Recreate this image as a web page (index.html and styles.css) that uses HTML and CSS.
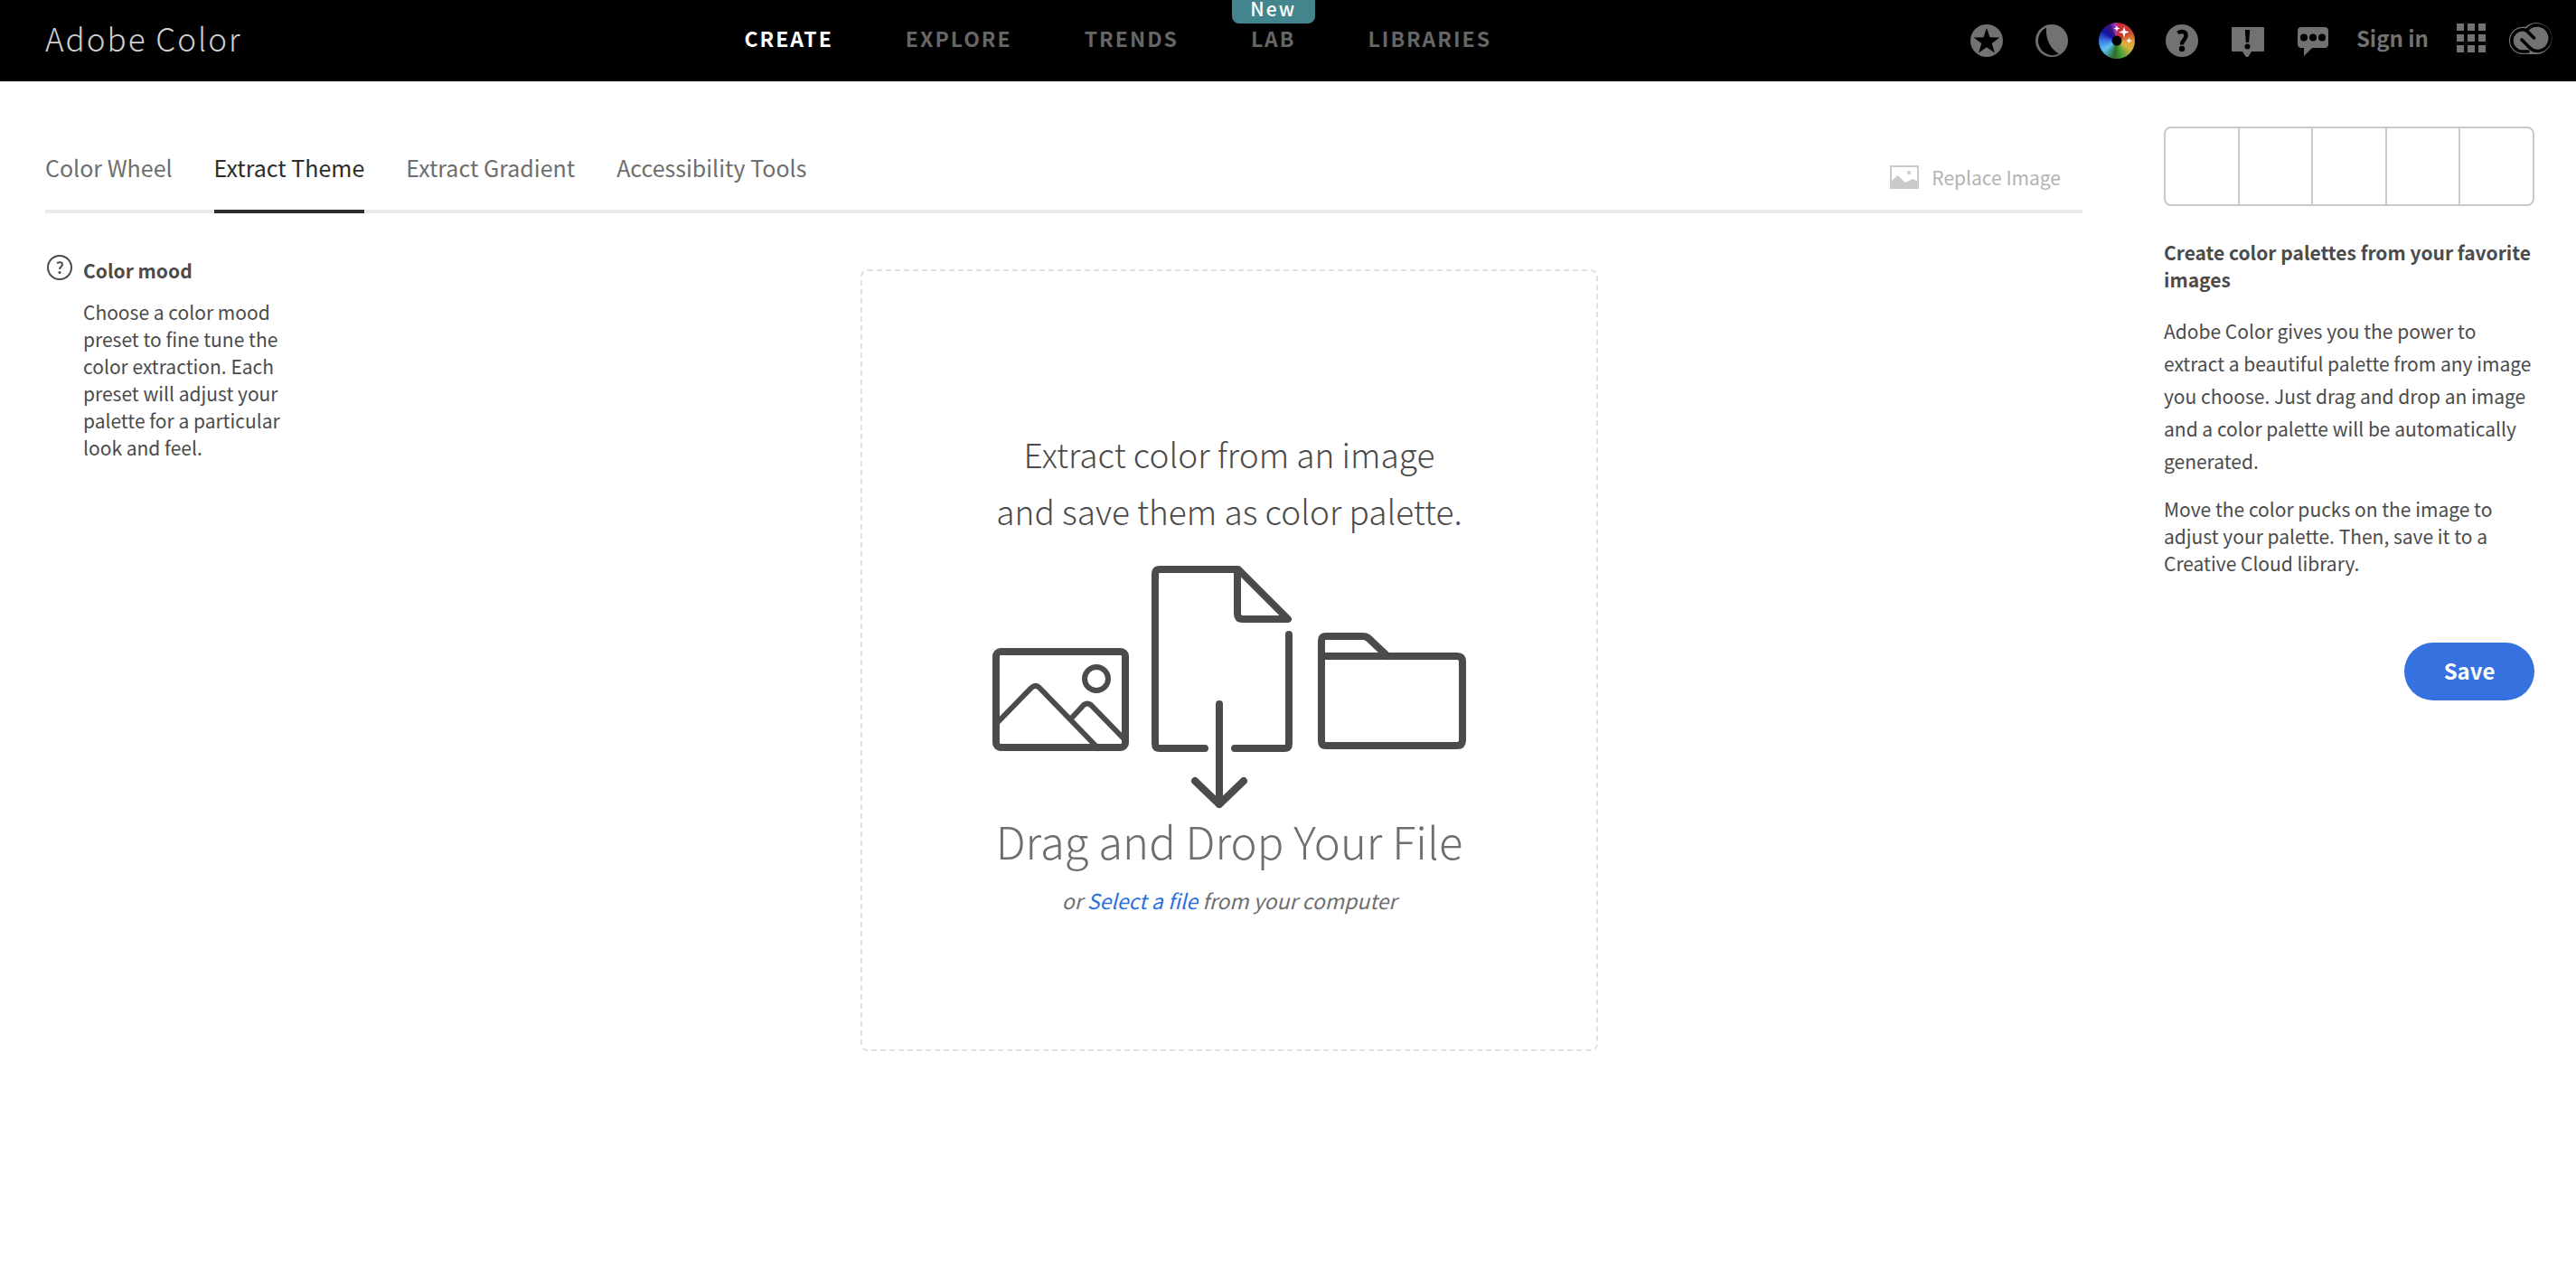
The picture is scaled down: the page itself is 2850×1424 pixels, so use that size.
FILE: index.html
```html
<!DOCTYPE html>
<html lang="en">
<head>
<meta charset="utf-8">
<title>Adobe Color</title>
<link rel="stylesheet" href="styles.css">
</head>
<body>
<header class="topbar">
  <a class="brand" href="#">Adobe Color</a>
  <nav class="mainnav" aria-label="Main">
    <a class="mainnav-link is-active" href="#">CREATE</a>
    <a class="mainnav-link" href="#">EXPLORE</a>
    <a class="mainnav-link" href="#">TRENDS</a>
    <a class="mainnav-link" href="#">LAB<span class="badge">New</span></a>
    <a class="mainnav-link" href="#">LIBRARIES</a>
  </nav>
  <div class="tools">
    <button class="tool" type="button" aria-label="Favorites"><svg width="36" height="36" viewBox="0 0 36 36"><circle cx="18" cy="18" r="18" fill="#727272"/><path d="M18 4l3.500 10.300 10.900.2-8.700 6.500 3.200 10.400L18 25.200l-8.900 6.200 3.200-10.400-8.700-6.500 10.900-.2z" fill="#000"/></svg></button>
    <button class="tool" type="button" aria-label="Appearance"><svg width="36" height="36" viewBox="0 0 36 36"><circle cx="18" cy="18" r="18" fill="#727272"/><path d="M12 3.500C11 14 15 26 26 32.500A16 16 0 0 1 12 3.500z" fill="#000"/></svg></button>
    <button class="tool wheel" type="button" aria-label="Color wheel"><svg width="40" height="40" viewBox="0 0 40 40"><circle cx="20" cy="20" r="5.500" fill="#000"/><path d="M28 4.500l1.400 4.600L34 10.500l-4.600 1.400L28 17l-1.400-5.100L22 10.500l4.600-1.400zM20 3l.9 2.600L23.500 6.500l-2.600.9L20 10l-.9-2.600L16.500 6.500l2.600-.9zM33.500 16.500l.9 2.600L37 20l-2.600.9-.9 2.600-.9-2.600L30 20l2.600-.9z" fill="#fff"/></svg></button>
    <button class="tool" type="button" aria-label="Help"><svg width="36" height="36" viewBox="0 0 36 36"><circle cx="18" cy="18" r="18" fill="#727272"/><path d="M13.500 9.500C18 6.500 22.500 8 22.500 12.500C22.500 17 18 17 18 22.500" fill="none" stroke="#000" stroke-width="4.500"/><circle cx="18" cy="27" r="3.200" fill="#000"/></svg></button>
    <button class="tool" type="button" aria-label="Feedback"><svg width="38" height="36" viewBox="0 0 38 36"><path d="M2 3h34q1 0 1 1v25q0 1-1 1H23l-5 8-5-8H2q-1 0-1-1V4q0-1 1-1z" fill="#727272"/><path d="M15.800 6h5.400l-1 14h-3.400z" fill="#000"/><circle cx="18.500" cy="24.500" r="3" fill="#000"/></svg></button>
    <button class="tool" type="button" aria-label="Discord"><svg width="34" height="36" viewBox="0 0 34 36"><path d="M4 3h26q4 0 4 4v15q0 4-4 4H16l-9 9V26H4q-4 0-4-4V7q0-4 4-4z" fill="#727272"/><circle cx="7" cy="14.500" r="4" fill="#000"/><circle cx="17" cy="14.500" r="4" fill="#000"/><circle cx="27" cy="14.500" r="4" fill="#000"/></svg></button>
    <a class="signin" href="#">Sign in</a>
    <button class="tool raised" type="button" aria-label="Apps"><svg width="32" height="32" viewBox="0 0 32 32" fill="#727272"><path d="M0 0h8v8H0zM12 0h8v8h-8zM24 0h8v8h-8zM0 12h8v8H0zM12 12h8v8h-8zM24 12h8v8h-8zM0 24h8v8H0zM12 24h8v8h-8zM24 24h8v8h-8z"/></svg></button>
    <a class="tool raised cloud" href="#" aria-label="Creative Cloud"><svg width="48" height="36" viewBox="0 0 48 36" fill="none" stroke="#000" stroke-width="3.600" stroke-linecap="round"><path d="M15 36h15.500a17.500 17.500 0 1 0-12.500-30.300h-3a15 15 0 0 0 0 30.300z" fill="#727272" stroke="none"/><path d="M27.500 18l-6-6Q18.500 8.800 15 8.800a12 12 0 0 0 0 24.200h6"/><path d="M14 20l9 9Q26.500 32.500 31 32.500a14.300 14.300 0 1 0-11-23.500"/></svg></a>
  </div>
</header>
<div class="layout">
  <main class="content">
    <div class="tabbar">
      <nav class="tabs" aria-label="Create tools">
        <a class="tab" href="#">Color Wheel</a>
        <a class="tab is-active" href="#">Extract Theme</a>
        <a class="tab" href="#">Extract Gradient</a>
        <a class="tab" href="#">Accessibility Tools</a>
      </nav>
      <button class="replace" type="button"><svg width="32" height="26" viewBox="0 0 32 26"><path d="M1 1h30v24H1z" fill="none" stroke="#cacaca" stroke-width="2"/><path d="M0 19l8.500-8 8.500 8 8-4 7 3v8H0z" fill="#cacaca"/><circle cx="21" cy="8" r="2" fill="#cacaca"/></svg>Replace Image</button>
    </div>
    <div class="workspace">
      <section class="mood">
        <svg class="mood-icon" width="28" height="28" viewBox="0 0 28 28"><circle cx="14" cy="14" r="13" fill="none" stroke="#4b4b4b" stroke-width="2"/><path d="M11 9c3-1.500 6-1 6 1.500 0 2.500-3 2.700-3 5.500" fill="none" stroke="#4b4b4b" stroke-width="2"/><circle cx="14" cy="19.500" r="1.500" fill="#4b4b4b"/></svg>
        <div class="mood-body">
          <h2 class="heading">Color mood</h2>
          <p class="mood-text">Choose a color mood preset to fine tune the color extraction. Each preset will adjust your palette for a particular look and feel.</p>
        </div>
      </section>
      <section class="dropzone">
        <p class="drop-intro">Extract color from an image<br>and save them as color palette.</p>
        <svg class="drop-art" width="524" height="268" viewBox="0 0 524 268" fill="none" stroke="#4b4b4b" stroke-width="8" stroke-linecap="round" stroke-linejoin="round">
          <rect x="4" y="95" width="143" height="106" rx="5"/>
          <g stroke-width="6"><circle cx="115" cy="125" r="13"/><path d="M6 173l37-38q5-4 9 0l65 67M88 168l13-14q4-3 8 0l36 37"/></g>
          <path d="M235 202h-50q-5 0-5-5V9q0-5 5-5h87l55 55h-50q-6 0-6-6V5M328 76v121q0 5-5 5h-55M251 153v111M224 238l27 26 27-26"/>
          <path d="M364 100V83q0-5 5-5h41q4 0 7 3l20 19M364 100h150q6 0 6 6v87q0 6-6 6H369q-5 0-5-5z"/>
        </svg>
        <p class="drop-title">Drag and Drop Your File</p>
        <p class="drop-sub">or <a class="drop-link" href="#">Select a file</a> from your computer</p>
      </section>
    </div>
  </main>
  <aside class="panel">
    <div class="palette"><span></span><span></span><span></span><span></span><span></span></div>
    <h2 class="heading">Create color palettes from your favorite images</h2>
    <p class="lead">Adobe Color gives you the power to extract a beautiful palette from any image you choose. Just drag and drop an image and a color palette will be automatically generated.</p>
    <p class="note">Move the color pucks on the image to adjust your palette. Then, save it to a Creative Cloud library.</p>
    <button class="save" type="button">Save</button>
  </aside>
</div>
</body>
</html>
```
FILE: styles.css
```css
* { box-sizing: border-box; }
body {
  margin: 0;
  background: #fff;
  color: #4b4b4b;
  font-family: "Noto Sans CJK SC", "Noto Sans", sans-serif;
  font-size: 21px;
  line-height: 30px;
}
h2, p { margin: 0; }
a { color: inherit; text-decoration: none; }
button { font: inherit; color: inherit; border: 0; padding: 0; background: none; cursor: pointer; }
svg { display: block; }

.topbar {
  display: flex;
  align-items: center;
  justify-content: space-between;
  height: 90px;
  padding: 0 26px 0 50px;
  background: #000;
  color: #727272;
}
.brand {
  margin-right: 26px;
  padding-bottom: 6px;
  color: #d0d0d0;
  font-size: 35px;
  font-weight: 300;
  letter-spacing: 2px;
  line-height: 48px;
}
.mainnav { display: flex; gap: 80px; align-self: flex-start; }
.mainnav-link {
  position: relative;
  color: #666;
  font-size: 23px;
  font-weight: 700;
  letter-spacing: 2px;
  line-height: 84px;
}
.mainnav-link.is-active { color: #fff; }
.badge {
  position: absolute;
  top: 0;
  left: 50%;
  width: 92px;
  height: 26px;
  margin-left: -46px;
  border-radius: 0 0 8px 8px;
  background: #43858c;
  color: #fff;
  font-size: 21px;
  font-weight: 500;
  line-height: 18px;
  text-align: center;
}
.tools { display: flex; align-items: center; gap: 36px; }
.wheel {
  margin: 0 -2px;
  border-radius: 50%;
  background: conic-gradient(#c8283c 0deg, #c8402c 55deg, #dca03c 95deg, #dcb43c 120deg, #50a03c 160deg, #2d6e28 190deg, #5fc3fa 235deg, #3c78e6 270deg, #1414a0 305deg, #3c1478 335deg, #aa3cdc 355deg, #c8283c 360deg);
}
.signin { margin: 0 -5px; padding-bottom: 6px; font-size: 24px; font-weight: 700; }
.raised { padding-bottom: 6px; }
.cloud { margin-left: -10px; }

.layout { display: flex; gap: 90px; padding: 0 46px 0 50px; }
.content { flex: 1; min-width: 0; }
.tabbar {
  display: flex;
  justify-content: space-between;
  margin-top: 79px;
  padding-right: 24px;
  box-shadow: inset 0 -4px #eaeaea;
}
.tabs { display: flex; gap: 46px; }
.tab {
  padding-bottom: 31px;
  border-bottom: 4px solid transparent;
  color: #6e6e6e;
  font-size: 25px;
  line-height: 32px;
}
.tab.is-active { border-color: #2c2c2c; color: #2c2c2c; }
.replace {
  display: flex;
  align-items: center;
  align-self: flex-start;
  gap: 14px;
  margin-top: 12px;
  color: #b3b3b3;
}
.workspace { display: flex; }
.mood { display: flex; gap: 12px; flex: 0 0 366px; padding: 46px 98px 0 2px; }
.mood-icon { flex: none; }
.mood-body { padding-top: 2px; }
.heading { font-size: 21px; font-weight: 700; line-height: 30px; }
.mood-text { margin-top: 16px; }
.dropzone {
  display: flex;
  flex-direction: column;
  align-items: center;
  width: 816px;
  margin: 62px auto 0;
  padding: 171px 24px 149px;
  border: 2px dashed #e1e1e1;
  border-radius: 8px;
  text-align: center;
}
.drop-intro { font-size: 37px; font-weight: 300; line-height: 63px; }
.drop-art { margin: 29px 0 4px; }
.drop-title { color: #6e6e6e; font-size: 49px; font-weight: 300; line-height: 64px; }
.drop-sub { margin-top: 18px; color: #6e6e6e; font-size: 23px; font-style: italic; line-height: 32px; }
.drop-link { color: #2d6ee0; }

.panel { display: flex; flex-direction: column; flex: 0 0 410px; padding-top: 50px; }
.palette {
  display: flex;
  height: 88px;
  margin-bottom: 36px;
  border: 2px solid #cacaca;
  border-radius: 8px;
}
.palette span { flex: 1; }
.palette span + span { border-left: 2px solid #cacaca; }
.lead { margin-top: 24px; line-height: 36px; }
.note { margin-top: 20px; }
.save {
  align-self: flex-end;
  width: 144px;
  height: 64px;
  margin-top: 73px;
  padding-bottom: 2px;
  border-radius: 32px;
  background: #3571df;
  color: #fff;
  font-size: 24px;
  font-weight: 700;
}
```
